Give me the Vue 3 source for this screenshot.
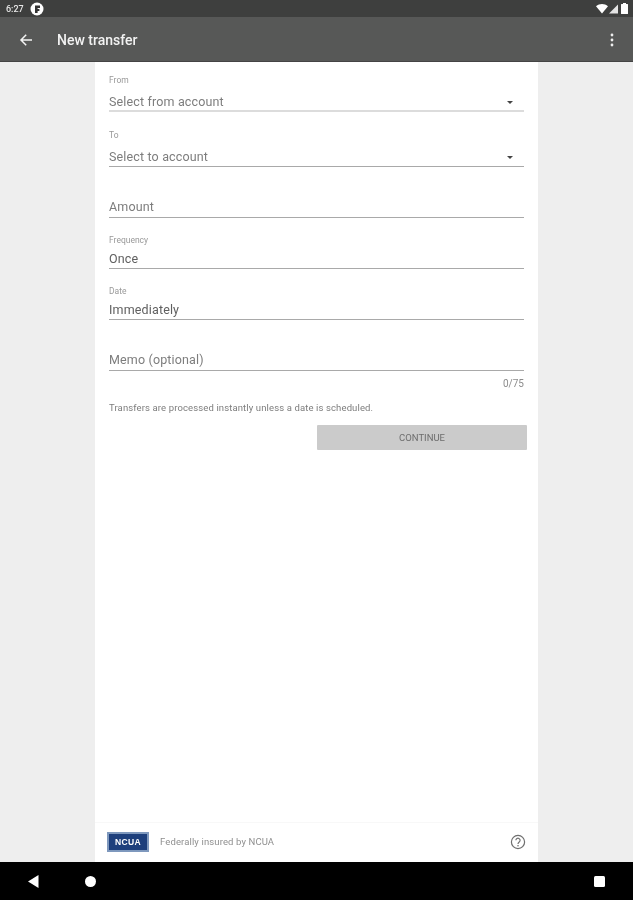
<script setup>
const fields = [
  { label: "From", value: "Select from account", cls: "f-from", select: true },
  { label: "To", value: "Select to account", cls: "f-to", select: true },
  { label: "", value: "Amount", cls: "f-amount" },
  { label: "Frequency", value: "Once", cls: "f-freq", dark: true },
  { label: "Date", value: "Immediately", cls: "f-date", dark: true },
  { label: "", value: "Memo (optional)", cls: "f-memo" },
];
</script>

<template>
  <div class="screen">
    <!-- status bar -->
    <div class="status">
      <span class="time">6:27</span>
      <svg class="notif" width="14" height="14" viewBox="0 0 14 14">
        <circle cx="7" cy="7" r="6.500" fill="#fff" />
        <path d="M5 3.500h5v2.400H7.600v1.200h1.800v2H7.600v2H5z" fill="#333" />
      </svg>
      <span class="grow"></span>
      <svg width="12" height="10" viewBox="0 0 12 10"><path d="M0 2.200C3.500-.7 8.500-.7 12 2.200L6 9.600z" fill="#fff" /></svg>
      <svg class="signal" width="9" height="10" viewBox="0 0 9 10"><path d="M0 9.500L9 .5v9z" fill="#e4e4e4" /></svg>
      <svg class="battery" width="7" height="11" viewBox="0 0 7 11"><path d="M2 0h3v1h1.500a.5.500 0 0 1 .5.500V10.500a.5.500 0 0 1-.5.500H.5a.5.500 0 0 1-.5-.5V1.500A.5.500 0 0 1 .5 1H2z" fill="#fff" /></svg>
    </div>

    <!-- app bar -->
    <div class="appbar">
      <svg class="back" width="14" height="14" viewBox="0 0 14 14">
        <path d="M13 7H2.500M7.200 1.800L2 7l5.200 5.200" fill="none" stroke="#f4f4f4" stroke-width="1.500" />
      </svg>
      <span class="title">New transfer</span>
      <span class="grow"></span>
      <svg class="more" width="4" height="14" viewBox="0 0 4 14">
        <circle cx="2" cy="2" r="1.400" fill="#eee" />
        <circle cx="2" cy="7" r="1.400" fill="#eee" />
        <circle cx="2" cy="12" r="1.400" fill="#eee" />
      </svg>
    </div>

    <div class="body">
      <div class="sheet">
        <div class="form">
          <div v-for="f in fields" :key="f.value" class="field" :class="f.cls">
            <div v-if="f.label" class="label">{{ f.label }}</div>
            <div class="row">
              <span class="value" :class="{ dark: f.dark }">{{ f.value }}</span>
              <span v-if="f.select" class="caret"></span>
            </div>
          </div>
          <div class="counter">0/75</div>
          <div class="note">Transfers are processed instantly unless a date is scheduled.</div>
          <div class="actions">
            <button class="continue">CONTINUE</button>
          </div>
        </div>

        <div class="footer">
          <div class="ncua"><span>NCUA</span></div>
          <span class="insured">Federally insured by NCUA</span>
          <span class="grow"></span>
          <svg class="help" width="16" height="16" viewBox="0 0 16 16">
            <circle cx="8" cy="8" r="6.600" fill="none" stroke="#6f6f6f" stroke-width="1.200" />
            <path d="M5.900 6.300a2.100 2.100 0 1 1 3.300 1.700c-.8.600-1.200 1-1.200 1.900" fill="none" stroke="#6f6f6f" stroke-width="1.200" />
            <circle cx="8" cy="11.700" r=".8" fill="#6f6f6f" />
          </svg>
        </div>
      </div>
    </div>

    <!-- nav bar -->
    <div class="navbar">
      <svg class="nav-back" width="11" height="13" viewBox="0 0 11 13"><path d="M10.500 0v13L0 6.500z" fill="#fff" /></svg>
      <span class="nav-home"></span>
      <span class="grow"></span>
      <span class="nav-recent"></span>
    </div>
  </div>
</template>

<style scoped>
.screen {
  width: 633px;
  height: 900px;
  display: flex;
  flex-direction: column;
  font-family: Roboto, "Liberation Sans", sans-serif;
  overflow: hidden;
  /* the reference is an upscaled, soft capture */
  filter: blur(0.6px);
}
.grow {
  flex: 1;
}

/* status bar */
.status {
  height: 17px;
  background: #3e3f3e;
  display: flex;
  align-items: center;
  padding: 0 5px 0 6px;
  color: #e8e8e8;
}
.time {
  font-size: 9px;
  font-weight: 500;
}
.notif {
  margin-left: 6px;
}
.signal {
  margin-left: 1px;
}
.battery {
  margin-left: 3px;
}

/* app bar */
.appbar {
  height: 45px;
  box-sizing: border-box;
  background: #575857;
  border-bottom: 1px solid #444;
  display: flex;
  align-items: center;
  padding: 1px 19px 0 19px;
}
.title {
  margin-left: 24px;
  color: #f2f2f2;
  font-size: 14px;
  font-weight: 500;
}

.body {
  flex: 1;
  min-height: 0;
  background: #eeeeee;
  display: flex;
  padding-left: 95px;
}
.sheet {
  width: 443px;
  background: #fff;
  display: flex;
  flex-direction: column;
}
.form {
  flex: 1;
  padding: 0 14px;
}

/* fields */
.field {
  border-bottom: 1px solid #a9a9a9;
}
.label {
  font-size: 8.500px;
  line-height: 10px;
  color: #999;
}
.row {
  display: flex;
  align-items: center;
  justify-content: space-between;
}
.value {
  font-size: 12.500px;
  line-height: 16px;
  color: #7d7d7d;
  letter-spacing: 0.15px;
}
.value.dark {
  color: #606060;
}
.caret {
  width: 0;
  height: 0;
  margin-right: 11px;
  border-left: 3px solid transparent;
  border-right: 3px solid transparent;
  border-top: 3px solid #444;
}
.f-from {
  padding: 13px 0 0;
  border-bottom: 2px solid #dcdcdc;
}
.f-from .label {
  margin-bottom: 9px;
}
.f-to {
  margin-top: 18px;
  padding-bottom: 1px;
}
.f-to .label {
  margin-bottom: 9px;
}
.f-amount {
  margin-top: 32px;
  padding-bottom: 2px;
}
.f-freq {
  margin-top: 17px;
  padding-bottom: 1px;
}
.f-freq .label {
  margin-bottom: 6px;
}
.f-date {
  margin-top: 17px;
  padding-bottom: 1px;
}
.f-date .label {
  margin-bottom: 6px;
}
.f-memo {
  margin-top: 32px;
  padding-bottom: 2px;
}

.counter {
  margin-top: 7px;
  text-align: right;
  font-size: 10px;
  line-height: 12px;
  color: #8c8c8c;
}
.note {
  margin-top: 12px;
  font-size: 9.500px;
  line-height: 12px;
  color: #7d7d7d;
  letter-spacing: 0.12px;
}
.actions {
  display: flex;
  justify-content: flex-end;
  margin: 11px -3px 0 0;
}
.continue {
  width: 210px;
  height: 25px;
  border: none;
  border-radius: 1px;
  background: #cbcbcb;
  color: #6d6d6d;
  font-family: inherit;
  font-size: 9.500px;
  font-weight: 400;
  padding: 0;
}

/* footer */
.footer {
  height: 40px;
  box-sizing: border-box;
  border-top: 1px solid #f8f8f8;
  display: flex;
  align-items: center;
  padding: 0 12px 2px 12px;
}
.ncua {
  width: 42px;
  height: 20px;
  box-sizing: border-box;
  background: #1d3f7c;
  border: 2px solid #7e98bd;
  display: flex;
  align-items: center;
  justify-content: center;
}
.ncua span {
  color: #fff;
  font-family: "Liberation Sans", sans-serif;
  font-size: 8.500px;
  font-weight: 700;
  letter-spacing: 0.4px;
}
.insured {
  margin-left: 11px;
  font-size: 9.500px;
  color: #8f8f8f;
  letter-spacing: 0.12px;
}

/* nav bar */
.navbar {
  height: 38px;
  background: #000;
  display: flex;
  align-items: center;
  padding: 0 28px;
}
.nav-home {
  width: 11px;
  height: 11px;
  margin-left: 46px;
  border-radius: 50%;
  background: #fff;
}
.nav-recent {
  width: 11px;
  height: 11px;
  border-radius: 1.500px;
  background: #fff;
}
</style>
